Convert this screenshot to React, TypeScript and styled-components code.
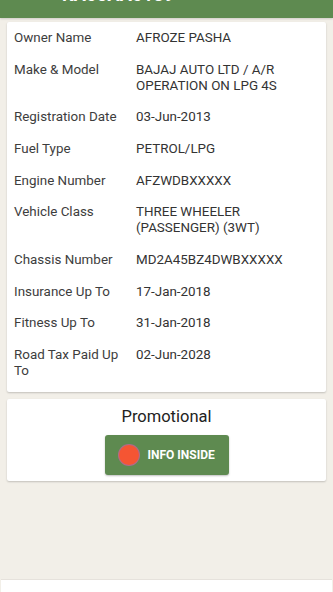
import React from "react";
import styled, { createGlobalStyle } from "styled-components";

const Global = createGlobalStyle`
  html, body { margin: 0; padding: 0; }
  body { background: #f2efe8; font-family: Roboto, "Noto Sans", Arial, sans-serif; }
  #root { width: 333px; height: 592px; overflow: hidden; }
`;

const Page = styled.div`
  width: 333px;
  height: 592px;
  display: flex;
  flex-direction: column;
  background: #f2efe8;
  overflow: hidden;
`;

const Header = styled.div`
  height: 18px;
  flex: none;
  background: #5e8a50;
  display: flex;
  align-items: flex-end;
  overflow: hidden;
  box-shadow: 0 1px 2px rgba(0,0,0,0.15);
`;

const HeaderInner = styled.div`
  display: flex;
  align-items: center;
  width: 100%;
  height: 30px;
  flex: none;
  margin-bottom: 9px;
  padding: 0 12px 0 20px;
  box-sizing: border-box;
  color: #fff;
`;

const Back = styled.span`
  font-size: 18px;
`;

const Title = styled.div`
  font-size: 18px;
  font-weight: 700;
  margin-left: 24px;
  letter-spacing: 0.3px;
`;

const Right = styled.div`
  margin-left: auto;
  font-size: 13px;
  color: rgba(255,255,255,0.6);
  font-weight: 500;
`;

const Content = styled.div`
  flex: 1;
  display: flex;
  flex-direction: column;
  gap: 7px;
  padding: 4px 7px 0 7px;
`;

const Card = styled.div`
  background: #fff;
  border-radius: 2px;
  box-shadow: 0 1px 2px rgba(0,0,0,0.2);
`;

const DetailCard = styled(Card)`
  padding: 0 0 5px 0;
`;

const Row = styled.div`
  display: grid;
  grid-template-columns: 122px 1fr;
  padding: 7.85px 8px 7.85px 7px;
  font-size: 13.4px;
  line-height: 16px;
`;

const Label = styled.div`
  color: #3d3d3d;
  padding-right: 6px;
`;

const Value = styled.div`
  color: #333;
`;

const PromoCard = styled(Card)`
  display: flex;
  flex-direction: column;
  align-items: center;
  padding: 9px 0 6px;
`;

const PromoTitle = styled.div`
  font-size: 16.5px;
  color: #222;
  line-height: 18px;
`;

const InfoButton = styled.button`
  margin-top: 9px;
  width: 124px;
  height: 40px;
  border: none;
  border-radius: 3px;
  background: #5e8a50;
  box-shadow: 0 1px 2px rgba(0,0,0,0.25);
  display: flex;
  align-items: center;
  padding: 0 0 0 14px;
  gap: 9px;
  color: #fff;
  font-family: Roboto, Arial, sans-serif;
  font-weight: 700;
  font-size: 12px;
`;

const Dot = styled.span`
  width: 20px;
  height: 20px;
  border-radius: 50%;
  background: #f55533;
  box-shadow: 0 0 0 1px #b06a8a;
`;

const BottomBar = styled.div`
  height: 12px;
  flex: none;
  margin: 0 1px;
  background: #fff;
  border-top: 1px solid #e6e2dc;
`;

const rows: [string, string][] = [
  ["Owner Name", "AFROZE PASHA"],
  ["Make & Model", "BAJAJ AUTO LTD / A/R OPERATION ON LPG 4S"],
  ["Registration Date", "03-Jun-2013"],
  ["Fuel Type", "PETROL/LPG"],
  ["Engine Number", "AFZWDBXXXXX"],
  ["Vehicle Class", "THREE WHEELER (PASSENGER) (3WT)"],
  ["Chassis Number", "MD2A45BZ4DWBXXXXX"],
  ["Insurance Up To", "17-Jan-2018"],
  ["Fitness Up To", "31-Jan-2018"],
  ["Road Tax Paid Up To", "02-Jun-2028"],
];

export default function App() {
  return (
    <Page>
      <Global />
      <Header>
        <HeaderInner>
          <Back>←</Back>
          <Title>KA05AA0139</Title>
          <Right>VEHICLE INFO</Right>
        </HeaderInner>
      </Header>
      <Content>
        <DetailCard>
          {rows.map(([l, v]) => (
            <Row key={l}>
              <Label>{l}</Label>
              <Value>{v}</Value>
            </Row>
          ))}
        </DetailCard>
        <PromoCard>
          <PromoTitle>Promotional</PromoTitle>
          <InfoButton>
            <Dot />
            INFO INSIDE
          </InfoButton>
        </PromoCard>
      </Content>
      <BottomBar />
    </Page>
  );
}
